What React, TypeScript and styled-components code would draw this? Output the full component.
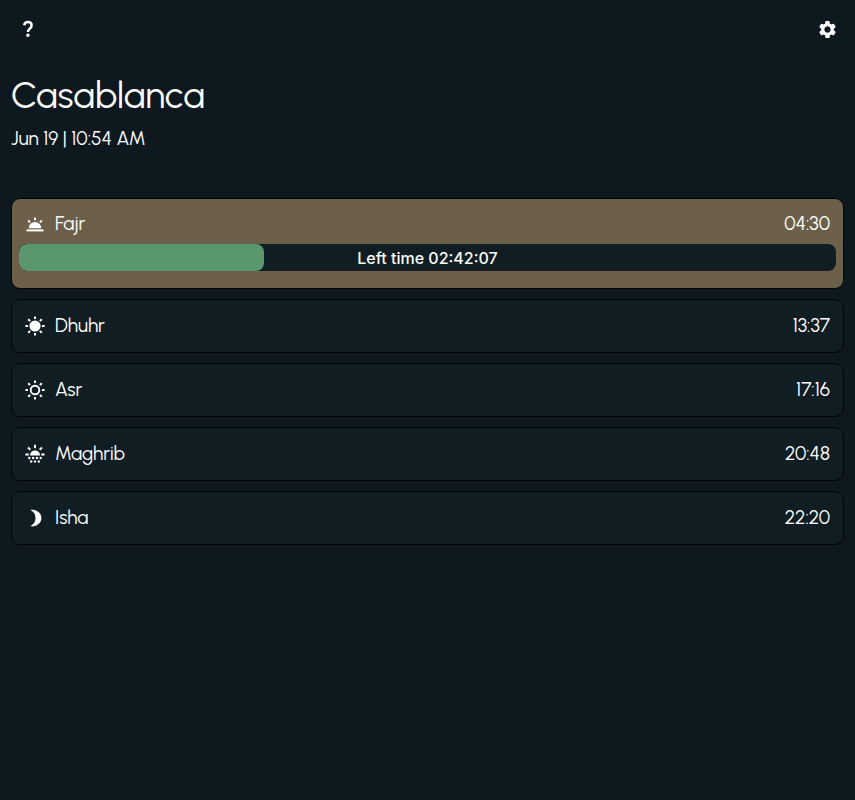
import React from "react";
import styled, { createGlobalStyle } from "styled-components";
import { MdSettings } from "react-icons/md";

const GlobalStyle = createGlobalStyle`
  *, *::before, *::after { box-sizing: border-box; }
  body {
    margin: 0;
    background: #0d191f;
    color: #fff;
    font-family: Urbanist, Lato, sans-serif;
    font-size: 19px;
    line-height: 24px;
  }
  h1, p, ul { margin: 0; padding: 0; }
`;

const Page = styled.main`
  min-height: 100vh;
  padding: 12px 11px;
`;

const Toolbar = styled.header`
  display: flex;
  justify-content: space-between;
`;

const IconButton = styled.button`
  display: grid;
  place-items: center;
  width: 34px;
  height: 34px;
  padding: 0;
  border: 0;
  background: transparent;
  color: inherit;
  cursor: pointer;
`;

const City = styled.h1`
  margin-top: 25px;
  font-size: 37px;
  font-weight: 400;
  line-height: 48px;
`;

const Moment = styled.p`
  margin-top: 8px;
`;

const PrayerList = styled.ul`
  display: flex;
  flex-direction: column;
  gap: 10px;
  margin-top: 47px;
  list-style: none;
`;

const Card = styled.li<{ $active?: boolean }>`
  padding: ${({ $active }) => ($active ? "13px 7px 17px" : "14px 7px")};
  border: 1px solid #020507;
  border-radius: 9px;
  background: ${({ $active }) => ($active ? "#6d604a" : "#101d23")};
`;

const Row = styled.div`
  display: flex;
  align-items: center;
  gap: 10px;
  padding: 0 6px;
`;

const Name = styled.span`
  flex: 1;
`;

const Progress = styled.div`
  position: relative;
  height: 27px;
  margin-top: 8px;
  overflow: hidden;
  border-radius: 8px;
  background: #101d23;
`;

const Fill = styled.div`
  height: 100%;
  border-radius: 8px;
  background: #5a966e;
`;

const Remaining = styled.span`
  position: absolute;
  inset: 0;
  display: grid;
  place-items: center;
  font: 500 16px/24px Inter, sans-serif;
`;

const Glyph = styled.svg`
  flex: none;
  width: 20px;
  height: 20px;
  fill: currentColor;
  stroke: currentColor;
  stroke-width: 0;
`;

type Kind = "dawn" | "noon" | "afternoon" | "sunset" | "night";

const rays = (
  <path
    strokeWidth="2"
    fill="none"
    d="M10 .4v2.6M10 17v2.6M.4 10h2.6M17 10h2.6M3.2 3.2l1.9 1.9M14.9 14.9l1.9 1.9M3.2 16.8l1.9-1.9M14.9 5.1l1.9-1.9"
  />
);

function PrayerIcon({ kind }: { kind: Kind }) {
  return (
    <Glyph viewBox="0 0 20 20" aria-hidden="true">
      {kind === "dawn" && (
        <>
          <path d="M3.8 14.2a6.2 6.2 0 0 1 12.4 0z" />
          <path d="M1.5 15.4h17v2h-17z" />
          <path strokeWidth="1.9" fill="none" d="M10 3.6v2.6M3.2 6.4l1.8 2M16.8 6.4l-1.8 2" />
        </>
      )}
      {kind === "noon" && (
        <>
          <circle cx="10" cy="10" r="5.6" />
          {rays}
        </>
      )}
      {kind === "afternoon" && (
        <>
          <circle cx="10" cy="10" r="4.3" strokeWidth="1.9" fill="none" />
          {rays}
        </>
      )}
      {kind === "sunset" && (
        <>
          <path d="M5 11.4a5 5 0 0 1 10 0z" />
          <path
            strokeWidth="2"
            fill="none"
            d="M10 .8v3.4M.4 10.4h3.4M16.2 10.4h3.4M3 3.5l2.3 2.3M17 3.5l-2.3 2.3"
          />
          <circle cx="4.3" cy="14" r="1.2" />
          <circle cx="8.1" cy="14" r="1.2" />
          <circle cx="11.9" cy="14" r="1.2" />
          <circle cx="15.7" cy="14" r="1.2" />
          <circle cx="6.2" cy="17.5" r="1.2" />
          <circle cx="10" cy="17.5" r="1.2" />
          <circle cx="13.8" cy="17.5" r="1.2" />
        </>
      )}
      {kind === "night" && (
        <path d="M5.5 2.1C11 .8 16.4 4.8 16.4 10.1S11 19.5 5.5 18.1C8.8 16.3 10.5 13.6 10.5 10.1S8.8 3.9 5.5 2.1z" />
      )}
    </Glyph>
  );
}

function HelpIcon() {
  return (
    <Glyph viewBox="0 0 20 20" aria-hidden="true">
      <path
        fill="none"
        strokeWidth="2.5"
        d="M6.1 6.2C6.6 4.2 8 3.1 9.9 3.1c2.2 0 3.7 1.4 3.7 3.4 0 3.1-3.7 3.3-3.7 6.6"
      />
      <circle cx="9.9" cy="16.2" r="1.7" />
    </Glyph>
  );
}

interface Prayer {
  name: string;
  time: string;
  kind: Kind;
  left?: string;
  progress?: number;
}

const prayers: Prayer[] = [
  { name: "Fajr", time: "04:30", kind: "dawn", left: "02:42:07", progress: 30 },
  { name: "Dhuhr", time: "13:37", kind: "noon" },
  { name: "Asr", time: "17:16", kind: "afternoon" },
  { name: "Maghrib", time: "20:48", kind: "sunset" },
  { name: "Isha", time: "22:20", kind: "night" },
];

export default function App() {
  return (
    <>
      <GlobalStyle />
      <Page>
        <Toolbar>
          <IconButton type="button" aria-label="Help">
            <HelpIcon />
          </IconButton>
          <IconButton type="button" aria-label="Settings">
            <MdSettings size={21} />
          </IconButton>
        </Toolbar>
        <City>Casablanca</City>
        <Moment>Jun 19 | 10:54 AM</Moment>
        <PrayerList>
          {prayers.map((prayer) => (
            <Card key={prayer.name} $active={prayer.left !== undefined}>
              <Row>
                <PrayerIcon kind={prayer.kind} />
                <Name>{prayer.name}</Name>
                <time>{prayer.time}</time>
              </Row>
              {prayer.left && (
                <Progress
                  role="progressbar"
                  aria-label="Left time"
                  aria-valuemin={0}
                  aria-valuemax={100}
                  aria-valuenow={prayer.progress}
                >
                  <Fill style={{ width: `${prayer.progress}%` }} />
                  <Remaining>Left time {prayer.left}</Remaining>
                </Progress>
              )}
            </Card>
          ))}
        </PrayerList>
      </Page>
    </>
  );
}
